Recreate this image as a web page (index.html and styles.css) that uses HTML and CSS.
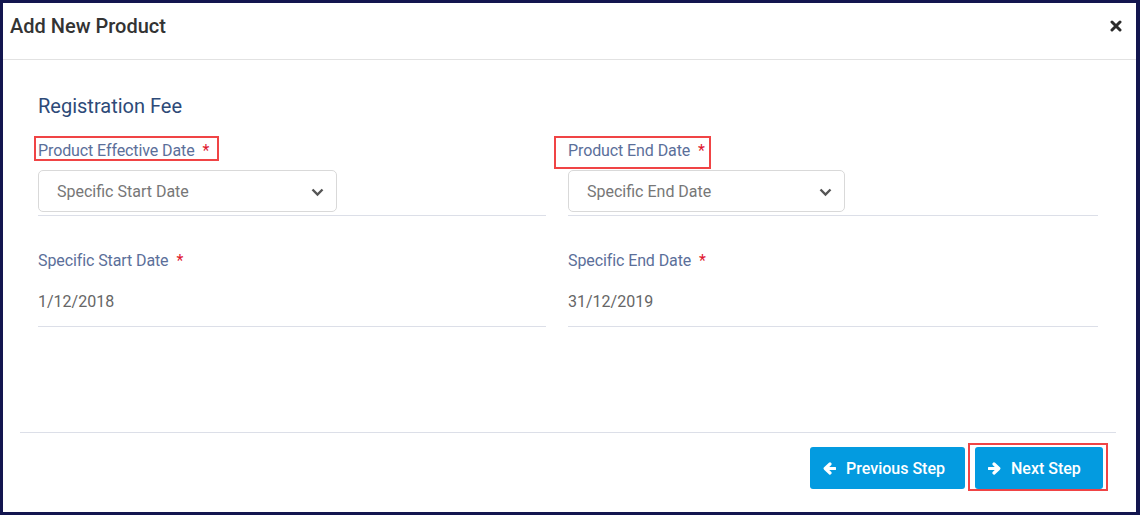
FILE: index.html
```html
<!DOCTYPE html>
<html>
<head>
<meta charset="utf-8">
<link rel="stylesheet" href="styles.css">
</head>
<body>
<div class="modal">
  <div class="modal-header">
    <h1 class="modal-title">Add New Product</h1>
    <button class="close" aria-label="Close">
      <svg width="12" height="12" viewBox="0 0 12 12"><path d="M2 2 L10 10 M10 2 L2 10" stroke="#2b2b2b" stroke-width="3" stroke-linecap="round"/></svg>
    </button>
  </div>
  <div class="modal-body">
    <h2 class="section-title">Registration Fee</h2>
    <div class="grid">
      <div class="field">
        <div class="label-row"><label class="label">Product Effective Date <span class="req">*</span><span class="mark mark-a"></span></label></div>
        <div class="select select-start">
          <span>Specific Start Date</span>
          <svg class="chev" width="13" height="9" viewBox="0 0 13 9"><path d="M1.5 1.5 L6.5 6.5 L11.5 1.5" fill="none" stroke="#555" stroke-width="2.4"/></svg>
        </div>
      </div>
      <div class="field">
        <div class="label-row"><label class="label">Product End Date <span class="req">*</span><span class="mark mark-b"></span></label></div>
        <div class="select select-end">
          <span>Specific End Date</span>
          <svg class="chev" width="13" height="9" viewBox="0 0 13 9"><path d="M1.5 1.5 L6.5 6.5 L11.5 1.5" fill="none" stroke="#555" stroke-width="2.4"/></svg>
        </div>
      </div>
      <div class="field">
        <div class="label-row"><label class="label">Specific Start Date <span class="req">*</span></label></div>
        <div class="value">1/12/2018</div>
      </div>
      <div class="field">
        <div class="label-row"><label class="label">Specific End Date <span class="req">*</span></label></div>
        <div class="value">31/12/2019</div>
      </div>
    </div>
  </div>
  <div class="modal-footer">
    <button class="btn btn-prev">
      <svg width="13" height="13" viewBox="0 0 13 13"><path d="M12 6.5 H3 M7 2 L2.2 6.5 L7 11" fill="none" stroke="#fff" stroke-width="3.2" stroke-linejoin="round" stroke-linecap="round"/></svg>
      Previous Step
    </button>
    <button class="btn btn-next">
      <svg width="13" height="13" viewBox="0 0 13 13"><path d="M1 6.5 H10 M6 2 L10.8 6.5 L6 11" fill="none" stroke="#fff" stroke-width="3.2" stroke-linejoin="round" stroke-linecap="round"/></svg>
      Next Step
      <span class="mark mark-c"></span>
    </button>
  </div>
</div>
</body>
</html>
```
FILE: styles.css
```css
html, body {
  margin: 0;
  padding: 0;
  background: #ffffff;
}
body {
  font-family: Roboto, "Liberation Sans", sans-serif;
}
.modal {
  box-sizing: border-box;
  width: 1140px;
  height: 515px;
  border-top: 3px solid #13164f;
  border-left: 3px solid #13164f;
  border-bottom: 3px solid #13164f;
  border-right: 4px solid #13164f;
  background: #fff;
  display: flex;
  flex-direction: column;
}
.modal-header {
  box-sizing: border-box;
  height: 57px;
  border-bottom: 1px solid #e2e2e2;
  display: flex;
  align-items: flex-start;
  justify-content: space-between;
  padding: 11px 14px 0 7px;
}
.modal-title {
  margin: 0;
  font-size: 20px;
  line-height: 24px;
  font-weight: 500;
  color: #333;
}
.close {
  background: none;
  border: 0;
  padding: 0;
  margin-top: 6px;
  display: flex;
}
.modal-body {
  flex: 1;
  padding: 34px 38px 0 35px;
}
.section-title {
  margin: 0 0 23px;
  font-size: 20px;
  font-weight: 400;
  color: #2d4a78;
  line-height: 24px;
}
.grid {
  display: grid;
  grid-template-columns: 508px 530px;
  column-gap: 22px;
  row-gap: 35px;
}
.field {
  border-bottom: 1px solid #dcdfe8;
  padding-bottom: 3px;
}
.label-row {
  margin-bottom: 10px;
  line-height: 19px;
}
.label {
  position: relative;
  display: inline-block;
  font-size: 16px;
  line-height: 19px;
  color: #5b6f9a;
  letter-spacing: -0.1px;
}
.req {
  color: #e0182f;
  margin-left: 4px;
}
.mark {
  position: absolute;
  box-sizing: border-box;
  border: 2px solid #f04445;
  pointer-events: none;
}
.mark-a {
  left: -4px;
  top: -5px;
  width: 185px;
  height: 25px;
}
.mark-b {
  left: -14px;
  top: -5px;
  width: 157px;
  height: 33px;
}
.mark-c {
  left: -7px;
  top: -4px;
  width: 140px;
  height: 48px;
}
.select {
  box-sizing: border-box;
  display: flex;
  align-items: center;
  justify-content: space-between;
  height: 42px;
  padding: 0 12px 0 18px;
  border: 1px solid #d9d9d9;
  border-radius: 5px;
  font-size: 16px;
  color: #777;
}
.select-start {
  width: 299px;
}
.select-end {
  width: 277px;
}
.chev {
  margin-top: 2px;
}
.value {
  font-size: 16px;
  color: #666;
  line-height: 19px;
  padding: 12px 0 12px;
}
.modal-footer {
  margin: 0 20px 0 17px;
  border-top: 1px solid #dcdfe8;
  padding: 14px 13px 23px 0;
  display: flex;
  justify-content: flex-end;
  gap: 10px;
}
.btn {
  position: relative;
  box-sizing: border-box;
  height: 42px;
  display: inline-flex;
  align-items: center;
  gap: 10px;
  padding: 0 0 0 13px;
  background: #039be0;
  border: 0;
  border-radius: 3px;
  color: #fff;
  font-family: Roboto, "Liberation Sans", sans-serif;
  font-size: 16px;
  font-weight: 500;
}
.btn-prev {
  width: 155px;
}
.btn-next {
  width: 128px;
}
```
